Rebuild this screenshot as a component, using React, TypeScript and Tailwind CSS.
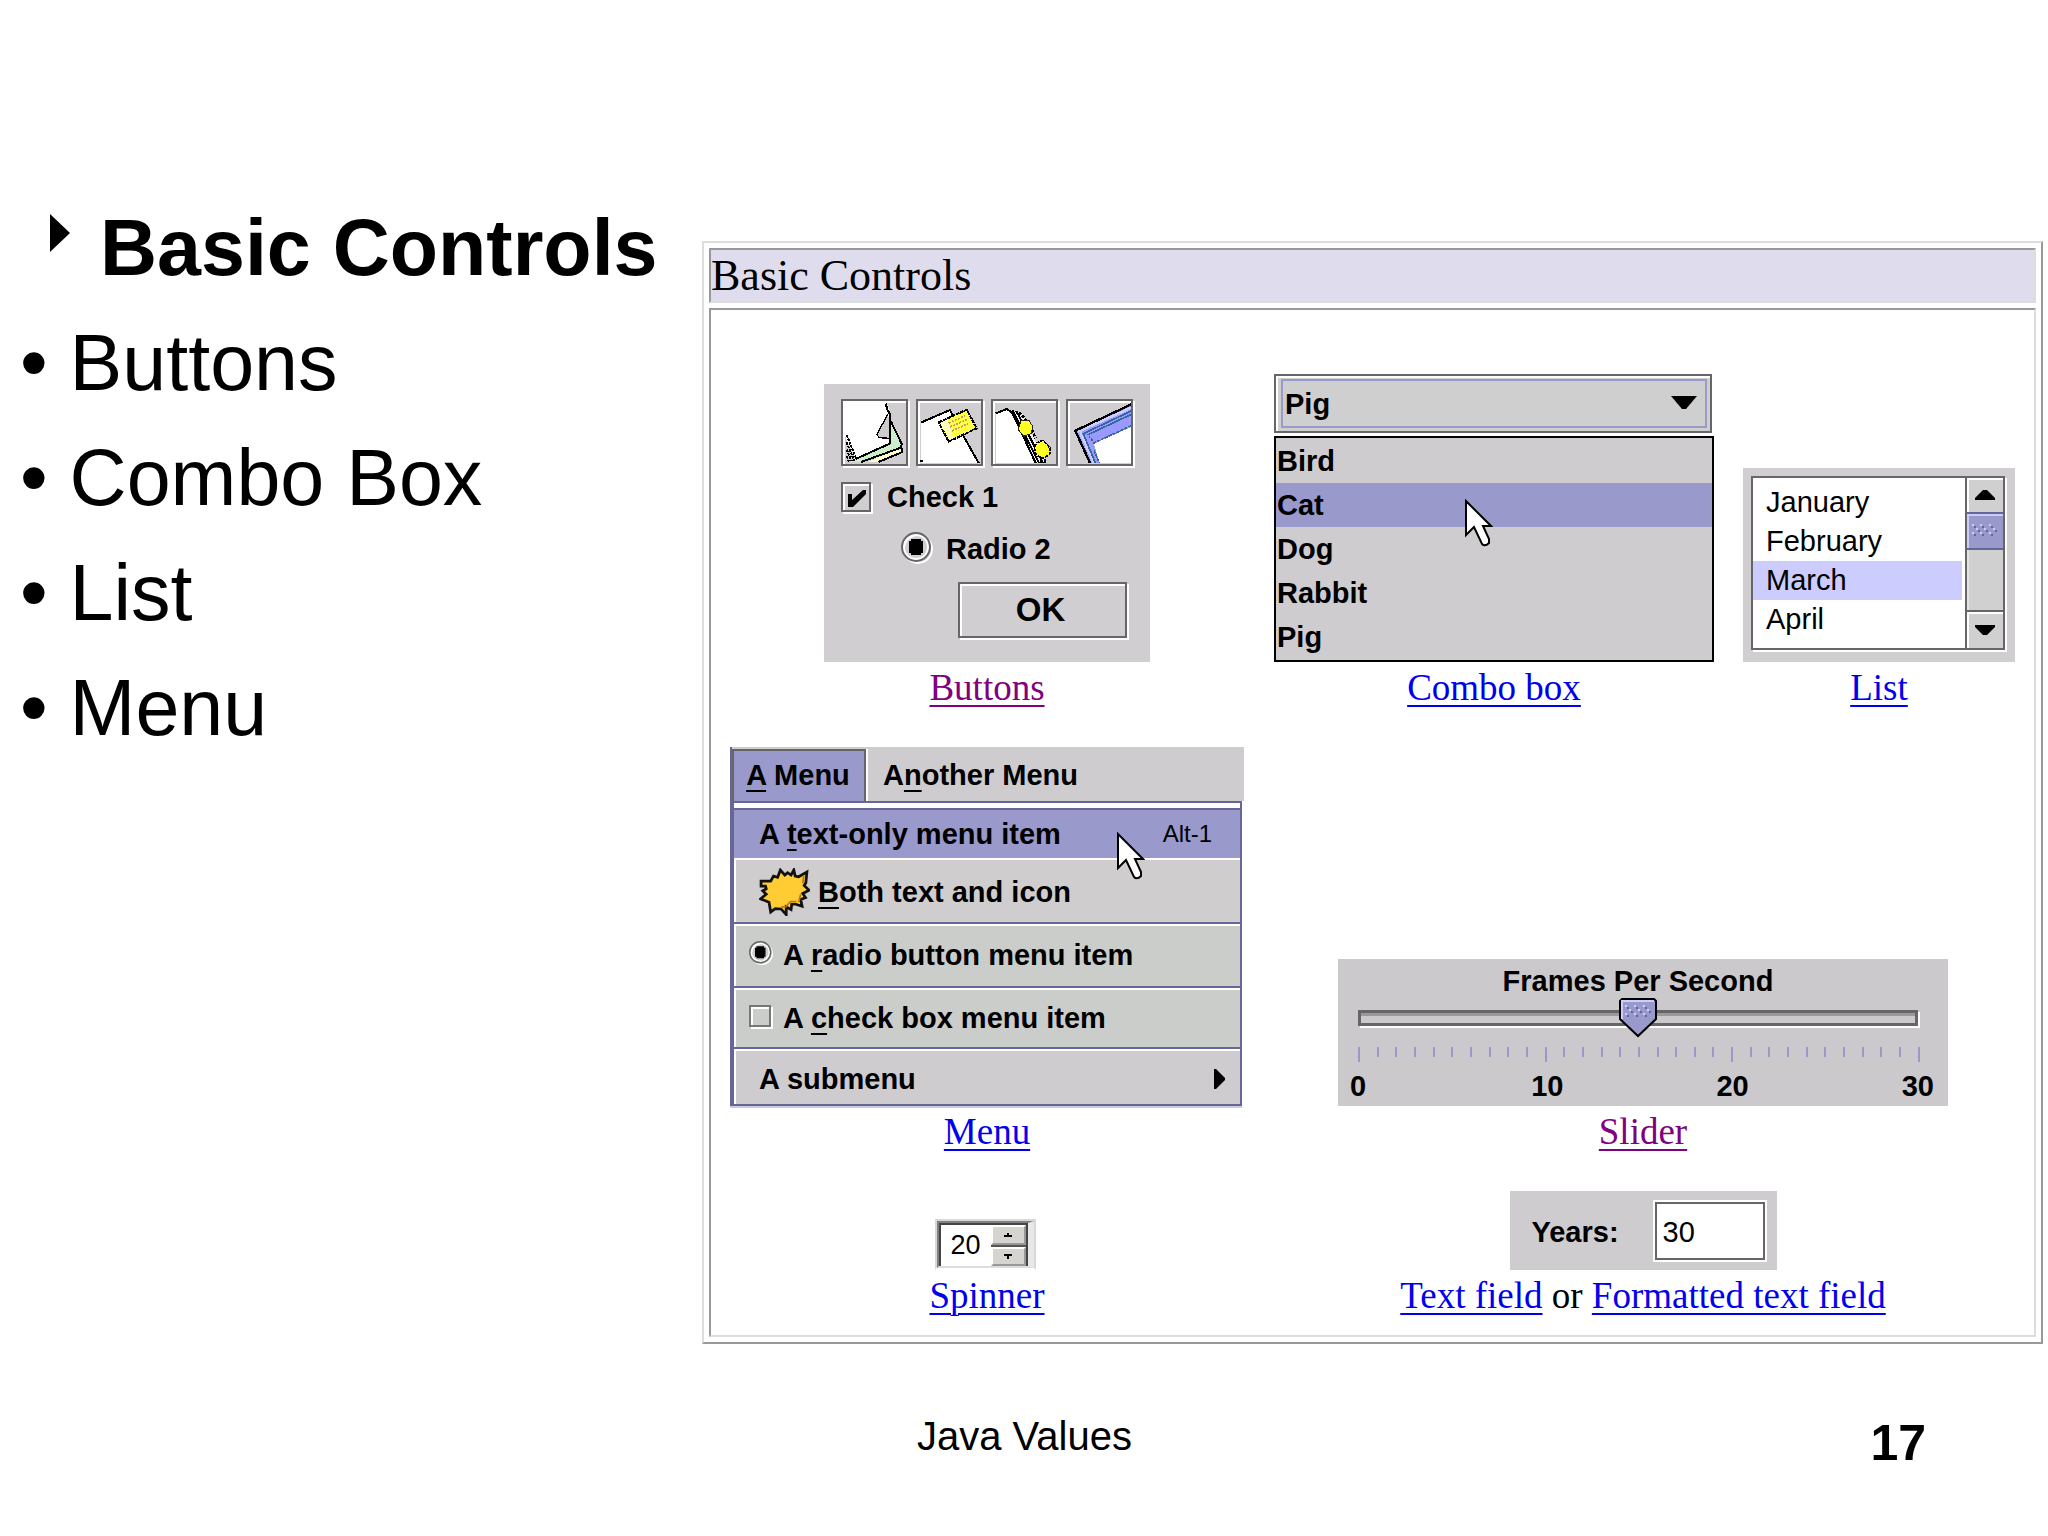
import { useState } from "react";
import type { ReactNode } from "react";

const topics = ["Buttons", "Combo Box", "List", "Menu"];
const pets = ["Bird", "Cat", "Dog", "Rabbit", "Pig"];
const months = ["January", "February", "March", "April"];
const ticks = Array.from({ length: 31 }, (_, i) => i);

const DocLink = ({
  children,
  visited,
}: {
  children: ReactNode;
  visited?: boolean;
}) => (
  <a
    href="#"
    className={
      visited
        ? "text-[#800080] underline decoration-2 underline-offset-[5px]"
        : "text-[#0000ee] underline decoration-2 underline-offset-[5px]"
    }
  >
    {children}
  </a>
);

const Demo = ({
  children,
  caption,
  wide,
}: {
  children: ReactNode;
  caption: ReactNode;
  wide?: boolean;
}) => (
  <figure
    className={
      wide
        ? "col-span-2 flex flex-col items-center self-end pl-1"
        : "flex flex-col items-center self-end"
    }
  >
    {children}
    <figcaption className="mt-[5px] whitespace-nowrap font-['Liberation_Serif',serif] text-[37px] leading-[42px]">
      {caption}
    </figcaption>
  </figure>
);

const Pointer = () => (
  <svg width="28" height="48" viewBox="0 0 28 48" aria-hidden="true">
    <path
      d="M1 2V36L9 28L17 45Q20 48 24 44V40L18 27H26Z"
      fill="#fff"
      stroke="#000"
      strokeWidth="2"
    />
  </svg>
);

const Bumps = ({ cols }: { cols: number[] }) => (
  <>
    {cols.map((x) => (
      <g key={x}>
        <path d={`M${x} 0h2v2h-2zM${x} 8h2v2h-2zM${x + 4} 4h2v2h-2z`} fill="#ccccff" />
        <path d={`M${x + 2} 2h2v2h-2zM${x + 2} 10h2v2h-2zM${x + 6} 6h2v2h-2z`} fill="#666699" />
      </g>
    ))}
  </>
);

const PagesIcon = () => (
  <>
    <path d="M148 66L184 138L182 160L60 189H30L40 178L146 134Z" fill="#cceecc" />
    <path d="M80 189L182 146V160L120 189Z" fill="#ffffcc" />
    <path d="M12 8H136L146 34V134L44 180L12 112Z" fill="#fff" />
    <path d="M142 42L108 106L116 118L146 120Z" fill="#ccc" />
    <g fill="none" stroke="#000" strokeWidth="6">
      <path d="M134 14L140 34L146 44V134L44 180" />
      <path d="M140 46L108 106L114 116L144 118" strokeWidth="4" />
      <path d="M150 68L182 134L180 146L60 189M182 148V160L112 189" />
      <path d="M17 108L46 180M17 130L40 186M17 152L32 186M17 172L24 188" strokeDasharray="8 3" />
    </g>
  </>
);

const NoteIcon = () => (
  <>
    <path d="M14 71L100 34L108 48L70 72L96 128L142 110L186 192H14Z" fill="#fff" />
    <path d="M14 71L102 33L110 48M142 110L188 192M12 186h8" fill="none" stroke="#000" strokeWidth="6" />
    <path d="M68 70L152 32L182 88L98 128Z" fill="#ffff44" />
    <path d="M72 72L96 62L112 118L98 124Z" fill="#ffffbb" />
    <path d="M68 70L152 32L182 88L98 128Z" fill="none" stroke="#000" strokeWidth="6" strokeDasharray="12 2" />
    <path d="M98 72L148 50M102 84L152 62M108 96L156 74" stroke="#cc9966" strokeWidth="5" strokeDasharray="6 4" />
  </>
);

const FilmIcon = () => (
  <>
    <path d="M14 43L48 30L66 40L136 192H14Z" fill="#fff" />
    <path d="M60 36L96 46L164 192H136Z" fill="#eee" />
    <g fill="none" stroke="#000" strokeWidth="6">
      <path d="M14 43L48 30L64 42L134 192M64 34L144 192M76 36L156 192" />
      <path d="M84 40L102 60L122 90L134 118" strokeWidth="8" strokeDasharray="9 4" />
      <path d="M150 176V192M162 180V192" />
    </g>
    <path d="M90 66L114 64L126 84L120 104L98 112L82 92Z" fill="#ffff22" stroke="#222" strokeWidth="3" />
    <path d="M136 132L156 124L178 148L176 166L156 178L136 168L130 148Z" fill="#ffff22" stroke="#000" strokeWidth="5" strokeDasharray="10 3" />
  </>
);

const FrameIcon = () => (
  <>
    <path d="M28 95L196 16V192H74Z" fill="#9999ff" />
    <path d="M84 134L196 84V192H100Z" fill="#fff" />
    <path d="M36 98L196 26M42 100L84 192" stroke="#ccccff" strokeWidth="8" />
    <g fill="none" stroke="#336699" strokeWidth="5">
      <path d="M196 36L52 104L88 192M196 46L64 108" />
      <path d="M196 80L84 132L70 112M84 154L100 192" strokeDasharray="10 3" />
    </g>
    <path d="M196 16L28 95L72 192" fill="none" stroke="#000" strokeWidth="7" />
  </>
);

const toolIcons = [
  { name: "Pages", Icon: PagesIcon },
  { name: "Note", Icon: NoteIcon },
  { name: "Film", Icon: FilmIcon },
  { name: "Frame", Icon: FrameIcon },
];

const RadioDot = ({ className }: { className: string }) => (
  <svg viewBox="0 0 32 32" className={className} aria-hidden="true">
    <circle cx="17" cy="17" r="14" fill="none" stroke="#fff" strokeWidth="2" />
    <circle cx="15" cy="15" r="12" fill="none" stroke="#fff" strokeWidth="2" />
    <circle cx="15" cy="15" r="14" fill="none" stroke="#666" strokeWidth="2" />
    <path d="M10 7h10v2h2v12h-2v2H10v-2H8V9h2z" fill="#000" />
  </svg>
);

const ButtonsDemo = () => (
  <div className="flex h-[278px] w-[326px] flex-col bg-[#d0ced1] pl-[17px] pt-[15px] text-[29px] font-bold leading-[30px]">
    <div className="flex gap-2">
      {toolIcons.map(({ name, Icon }) => (
        <button
          key={name}
          type="button"
          aria-label={name}
          className="size-[67px] border-2 border-[#666] shadow-[inset_2px_2px_#fff,2px_2px_#fff]"
        >
          <svg viewBox="6 6 189 189" className="size-full" shapeRendering="crispEdges">
            <svg x="12" y="10" width="183" height="185" viewBox="12 10 183 185">
              <Icon />
            </svg>
          </svg>
        </button>
      ))}
    </div>
    <label className="mt-4 flex items-center">
      <span className="relative size-[30px]">
        <input
          type="checkbox"
          defaultChecked
          className="block size-[30px] appearance-none border-2 border-[#666] shadow-[inset_2px_2px_#fff,2px_2px_#fff]"
        />
        <svg viewBox="0 0 30 30" className="pointer-events-none absolute inset-0" aria-hidden="true">
          <path d="M7 12h4v6L22 8h3v4L12 25H7z" fill="#000" />
        </svg>
      </span>
      <span className="ml-4">Check 1</span>
    </label>
    <label className="ml-[60px] mt-5 flex items-end">
      <span className="relative size-8">
        <input type="radio" name="radio" defaultChecked className="block size-8 appearance-none" />
        <RadioDot className="pointer-events-none absolute inset-0 size-8" />
      </span>
      <span className="ml-[13px]">Radio 2</span>
    </label>
    <button
      type="button"
      className="ml-[117px] mt-[18px] h-[56px] w-[169px] border-2 border-[#666] pr-1 text-[33px] font-bold shadow-[inset_2px_2px_#fff,2px_2px_#fff]"
    >
      OK
    </button>
  </div>
);

const ComboDemo = () => (
  <div className="w-[440px] text-[29px] font-bold">
    <div className="relative mr-[2px] h-[59px] border-2 border-[#666] bg-[#cfcfcf] p-[3px] pl-[5px] shadow-[inset_2px_2px_#fff,2px_2px_#fff]">
      <select
        aria-label="Pet"
        defaultValue="Pig"
        className="block h-full w-full appearance-none border-2 border-[#9999cc] bg-[#cfcfcf] pl-[2px] pt-[2px]"
      >
        {pets.map((pet) => (
          <option key={pet}>{pet}</option>
        ))}
      </select>
      <svg
        viewBox="0 0 26 13"
        className="pointer-events-none absolute right-[13px] top-5 h-[13px] w-[26px]"
        aria-hidden="true"
      >
        <path d="M0 0H26L15 13H11Z" />
      </svg>
    </div>
    <ul
      role="listbox"
      aria-label="Pets"
      className="mt-[3px] border-2 border-black bg-[#cecccf] pb-[1px] pt-[1px] leading-[44px]"
    >
      {pets.map((pet) => (
        <li
          key={pet}
          role="option"
          aria-selected={pet === "Cat"}
          className={pet === "Cat" ? "relative bg-[#9999cc] pl-[1px]" : "pl-[1px]"}
        >
          {pet}
          {pet === "Cat" && (
            <span className="absolute left-[189px] top-4 z-10">
              <Pointer />
            </span>
          )}
        </li>
      ))}
    </ul>
  </div>
);

const ListDemo = () => (
  <div className="h-[194px] w-[272px] bg-[#d0ced1] pl-2 pr-[10px] pt-2">
    <div className="flex h-[174px] border-2 border-[#666] bg-white shadow-[2px_2px_#fff]">
      <ul
        role="listbox"
        aria-label="Months"
        className="mr-[3px] flex-1 pt-[5px] text-[29px] leading-[39px]"
      >
        {months.map((month) => (
          <li
            key={month}
            role="option"
            aria-selected={month === "March"}
            className={month === "March" ? "bg-[#ccccff] pl-[13px]" : "pl-[13px]"}
          >
            {month}
          </li>
        ))}
      </ul>
      <div className="flex w-[38px] flex-col border-l-2 border-[#666] bg-[#cfd0cf]">
        <button
          type="button"
          aria-label="Scroll up"
          className="flex h-[34px] items-center justify-center shadow-[inset_2px_2px_#fff]"
        >
          <svg width="20" height="10" viewBox="0 0 20 10">
            <path d="M8 0h4l8 8v2H0V8z" />
          </svg>
        </button>
        <div className="flex h-[38px] items-center justify-center border-y-2 border-[#666699] bg-[#9999cc] shadow-[inset_2px_2px_#ccccff]">
          <svg width="26" height="14" viewBox="0 0 26 14" aria-hidden="true">
            <Bumps cols={[0, 8, 17]} />
          </svg>
        </div>
        <div className="flex-1 shadow-[inset_2px_0_#e4e4e4]" />
        <button
          type="button"
          aria-label="Scroll down"
          className="flex h-[38px] items-center justify-center border-t-2 border-[#666] shadow-[inset_2px_2px_#fff]"
        >
          <svg width="20" height="10" viewBox="0 0 20 10">
            <path d="M0 0h20v2l-8 8H8L0 2z" />
          </svg>
        </button>
      </div>
    </div>
  </div>
);

const Key = ({ children }: { children: string }) => (
  <span className="underline decoration-2 underline-offset-[5px] [text-decoration-skip-ink:none]">
    {children}
  </span>
);

const MenuDemo = () => (
  <div className="w-[514px] text-[29px] font-bold leading-[34px]">
    <div className="flex h-[54px] border-l-2 border-[#666699] bg-[#cecccf] pt-[2px]">
      <button
        type="button"
        className="w-[134px] border-2 border-b-0 border-[#666] bg-[#9999cc] pb-[2px] pr-[2px] shadow-[2px_0_#fff]"
      >
        <Key>A</Key> Menu
      </button>
      <button type="button" className="ml-[17px]">
        A<Key>n</Key>other Menu
      </button>
    </div>
    <div className="mr-[2px] border-2 border-l-4 border-[#666699] shadow-[0_2px_#ccccdd]">
      <div className="h-[5px] bg-white" />
      <button
        type="button"
        className="relative flex h-[50px] w-full items-center justify-between border-t-2 border-[#666699] bg-[#9999cc] pl-[25px] pr-7"
      >
        <span>
          A <Key>t</Key>ext-only menu item
        </span>
        <span className="text-2xl font-normal">Alt-1</span>
        <span className="absolute left-[383px] top-[22px] z-10">
          <Pointer />
        </span>
      </button>
      <button
        type="button"
        className="flex h-[66px] w-full items-center border-b-2 border-[#666699] bg-[#cfcdce] pl-[25px] pt-1 shadow-[inset_2px_2px_#fff]"
      >
        <svg viewBox="111 406 148 143" preserveAspectRatio="none" className="mr-[8px] h-[48px] w-[51px]" aria-hidden="true">
          <path
            d="M117 445H145L153 430L165 434L173 412L186 427L194 420L204 427L212 412L216 430L226 432L250 418L247 450L242 458L256 472L238 482L246 494L232 500L236 520L218 514L206 514L204 530L190 522L190 545L175 528L158 527L145 537L140 508L116 498L132 484L122 474L132 468L130 460L117 460Z"
            fill="#ffcc33"
            stroke="#111"
            strokeWidth="8"
          />
          <path d="M241 428L238 452M232 484L226 508M220 506H202L188 522H176" fill="none" stroke="#b87a10" strokeWidth="5" />
        </svg>
        <span>
          <Key>B</Key>oth text and icon
        </span>
      </button>
      <label className="flex h-16 items-center border-b-2 border-[#666699] bg-[#cbcdcb] pl-[15px] shadow-[inset_2px_2px_#fff]">
        <span className="relative mb-1 size-6">
          <input type="radio" name="menu-radio" defaultChecked className="block size-6 appearance-none" />
          <RadioDot className="pointer-events-none absolute inset-0 size-6" />
        </span>
        <span className="ml-[10px]">
          A <Key>r</Key>adio button menu item
        </span>
      </label>
      <label className="flex h-[61px] items-center border-b-2 border-[#666699] bg-[#cbcdcb] pl-[15px] shadow-[inset_2px_2px_#fff]">
        <input
          type="checkbox"
          className="mb-1 size-[22px] appearance-none border-2 border-[#777] shadow-[inset_2px_2px_#fff,2px_2px_#fff]"
        />
        <span className="ml-3">
          A <Key>c</Key>heck box menu item
        </span>
      </label>
      <button
        type="button"
        className="flex h-[55px] w-full items-center justify-between bg-[#cecccf] pl-[25px] pr-[15px] pt-1 shadow-[inset_2px_2px_#fff]"
      >
        <span>A submenu</span>
        <svg width="11" height="20" viewBox="0 0 11 20" aria-hidden="true">
          <path d="M0 0H2L11 9V11L2 20H0Z" />
        </svg>
      </button>
    </div>
  </div>
);

const SliderDemo = () => {
  const [fps, setFps] = useState(15);
  return (
    <div className="h-[147px] w-[610px] bg-[#cbc9cb] px-5 text-[29px] font-bold">
      <label htmlFor="fps" className="block pr-[10px] pt-1 text-center leading-[36px]">
        Frames Per Second
      </label>
      <div className="relative mr-[10px] mt-[11px] h-4">
        <input
          id="fps"
          type="range"
          min={0}
          max={30}
          value={fps}
          onChange={(e) => setFps(Number(e.target.value))}
          className="block h-4 w-full appearance-none border-[3px] border-[#666] bg-[#cbc9cb] shadow-[inset_0_3px_#999,2px_2px_#fff] [&::-webkit-slider-thumb]:size-4 [&::-webkit-slider-thumb]:appearance-none [&::-webkit-slider-thumb]:bg-transparent"
        />
        <svg
          viewBox="0 0 38 40"
          className="pointer-events-none absolute -top-3 h-10 w-[38px] -translate-x-1/2"
          style={{ left: `${(fps / 30) * 100}%` }}
          aria-hidden="true"
        >
          <path d="M1 3L3 1H35L37 3V21L19 38L1 21Z" fill="#9999cc" stroke="#000" strokeWidth="2" />
          <path d="M3 21V3H35" fill="none" stroke="#ccccff" strokeWidth="2" />
          <g transform="translate(6 7)">
            <Bumps cols={[0, 9, 18]} />
          </g>
        </svg>
      </div>
      <div className="mr-2 mt-[21px] flex h-[15px] justify-between">
        {ticks.map((t) => (
          <span
            key={t}
            className={t % 10 === 0 ? "h-[15px] w-[2px] bg-[#9999cc]" : "h-[10px] w-[2px] bg-[#9999cc]"}
          />
        ))}
      </div>
      <div className="-ml-2 -mr-[6px] mt-[7px] flex justify-between leading-[34px]">
        <span>0</span>
        <span className="ml-3">10</span>
        <span>20</span>
        <span>30</span>
      </div>
    </div>
  );
};

const SpinnerDemo = () => (
  <div className="mr-1 border-2 border-[#d8d8d8] border-b-transparent">
    <div className="flex h-[47px] w-[97px] border-2 border-r-[6px] border-[#808080] border-b-[#ddd] border-r-[#e8e8e8]">
      <div className="flex flex-1 border-l-2 border-r-2 border-t-2 border-[#444] bg-white">
        <input
          aria-label="Spinner value"
          defaultValue="20"
          className="w-[50px] bg-white pl-[10px] text-[27px]"
        />
        <div className="flex flex-1 flex-col bg-[#555]">
          <button
            type="button"
            aria-label="Increase"
            className="flex flex-1 items-center justify-center border-2 border-white border-b-[#999] border-r-[#999] bg-[#d6d4ce]"
          >
            <svg width="8" height="4" viewBox="0 0 8 4">
              <path d="M3 0h2v2h3v2H0V2h3z" />
            </svg>
          </button>
          <button
            type="button"
            aria-label="Decrease"
            className="mt-[2px] flex flex-1 items-center justify-center border-2 border-white border-b-[#999] border-r-[#999] bg-[#d6d4ce]"
          >
            <svg width="8" height="5" viewBox="0 0 8 5">
              <path d="M0 0h8v2H5v3H3V2H0z" />
            </svg>
          </button>
        </div>
      </div>
    </div>
  </div>
);

const TextFieldDemo = () => (
  <div className="flex h-[79px] w-[267px] items-center justify-between bg-[#cecccf] pl-[22px] pr-3">
    <label htmlFor="years" className="pt-1 text-[29px] font-bold">
      Years:
    </label>
    <input
      id="years"
      defaultValue="30"
      className="h-[58px] w-[110px] border-2 border-[#666] bg-white pl-[6px] pt-1 text-[29px] shadow-[0_0_0_2px_#fff]"
    />
  </div>
);

const App = () => {
  return (
    <main className="bg-white font-['Liberation_Sans',Arial,sans-serif] text-black">
      <div className="flex items-start">
        <section className="w-[702px] shrink-0 pl-5 pt-[190px] text-[79px] leading-[115px]">
          <h1 className="flex whitespace-nowrap pl-[30px] font-bold">
            <svg width="20" height="38" viewBox="0 0 20 38" className="mr-[30px] mt-6" aria-hidden="true">
              <path d="M0 0L20 19L0 38Z" />
            </svg>
            Basic Controls
          </h1>
          <ul>
            {topics.map((topic) => (
              <li key={topic}>• {topic}</li>
            ))}
          </ul>
        </section>

        <section className="mr-[5px] mt-[241px] flex-1 border-2 border-[#ddd] border-b-[#999] border-r-[#999] p-[5px]">
          <h2 className="border-2 border-[#999] border-b-[#ddd] border-r-[#ddd] bg-[#dfdcee] pt-[1px] font-['Liberation_Serif',serif] text-[44px] leading-[50px]">
            Basic Controls
          </h2>
          <div className="mt-[5px] grid grid-cols-[538fr_476fr_294fr] gap-y-[38px] border-2 border-[#999] border-b-[#ddd] border-r-[#ddd] pb-[18px] pl-[7px] pr-2 pt-16">
            <Demo caption={<DocLink visited>Buttons</DocLink>}>
              <ButtonsDemo />
            </Demo>
            <Demo caption={<DocLink>Combo box</DocLink>}>
              <ComboDemo />
            </Demo>
            <Demo caption={<DocLink>List</DocLink>}>
              <ListDemo />
            </Demo>
            <Demo caption={<DocLink>Menu</DocLink>}>
              <MenuDemo />
            </Demo>
            <Demo wide caption={<DocLink visited>Slider</DocLink>}>
              <SliderDemo />
            </Demo>
            <Demo caption={<DocLink>Spinner</DocLink>}>
              <SpinnerDemo />
            </Demo>
            <Demo
              wide
              caption={
                <>
                  <DocLink>Text field</DocLink> or <DocLink>Formatted text field</DocLink>
                </>
              }
            >
              <TextFieldDemo />
            </Demo>
          </div>
        </section>
      </div>

      <footer className="mt-[69px] flex items-start justify-between pl-[917px] pr-[122px]">
        <p className="text-[40px] leading-[46px]">Java Values</p>
        <p className="text-[50px] font-bold leading-[60px]">17</p>
      </footer>
    </main>
  );
};

export default App;
